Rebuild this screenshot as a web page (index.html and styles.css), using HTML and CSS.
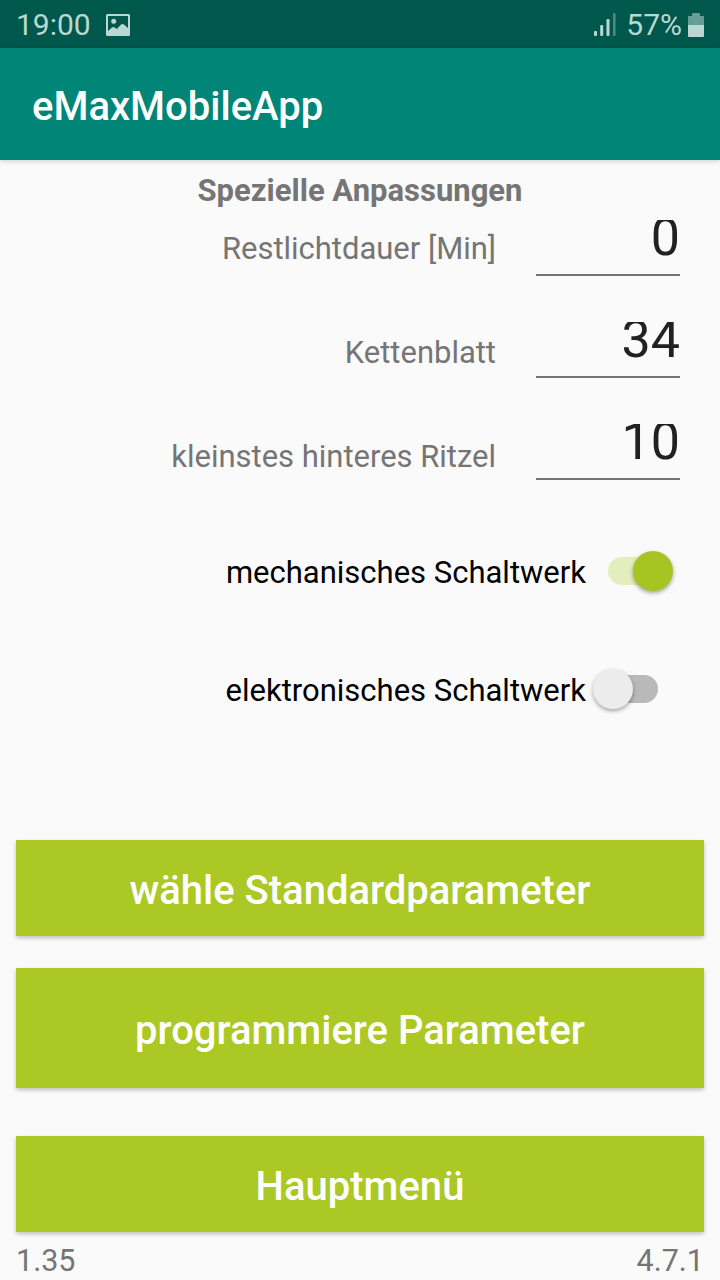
FILE: index.html
```html
<!DOCTYPE html>
<html lang="de">
<head>
<meta charset="utf-8">
<title>eMaxMobileApp</title>
<link rel="stylesheet" href="styles.css">
</head>
<body>
<header class="status">
  <span class="clock">19:00</span>
  <svg class="picture" width="24" height="22" viewBox="0 0 24 22"><path fill="currentColor" fill-rule="evenodd" d="M1.5 0h21A1.5 1.5 0 0 1 24 1.500v19a1.500 1.500 0 0 1-1.500 1.500h-21A1.500 1.500 0 0 1 0 20.500v-19A1.500 1.500 0 0 1 1.500 0zM2 2v15l4-3.500q1.500-1 3 .2l1.800 1.300 4-4.200q1.700-1.600 3.400 0L22 14V2z"/><circle cx="7.700" cy="7.300" r="2.500" fill="currentColor"/></svg>
  <span class="space"></span>
  <svg class="signal" width="22" height="23" viewBox="0 0 22 23" fill="currentColor"><rect y="18" width="3" height="5" rx="1"/><rect x="6.200" y="12" width="3" height="11" rx="1"/><rect x="12.500" y="6" width="3" height="17" rx="1"/><rect x="19" width="2.600" height="23" rx="1" opacity=".4"/></svg>
  <span class="percent">57%</span>
  <svg class="battery" width="16" height="24" viewBox="0 0 16 24" fill="currentColor"><path opacity=".55" d="M5 0h6q1 0 1 1v2h3q1 0 1 1v8H0V4q0-1 1-1h3V1q0-1 1-1z"/><path d="M0 12h16v11q0 1-1 1H1q-1 0-1-1z"/></svg>
</header>
<div class="appbar">eMaxMobileApp</div>
<main>
  <h1 class="heading">Spezielle Anpassungen</h1>
  <section class="fields">
    <div class="field"><span class="label">Restlichtdauer [Min]</span><div class="input"><span>0</span></div></div>
    <div class="field"><span class="label">Kettenblatt</span><div class="input"><span>34</span></div></div>
    <div class="field"><span class="label">kleinstes hinteres Ritzel</span><div class="input"><span>10</span></div></div>
  </section>
  <section class="switches">
    <div class="switch-row"><span class="switch-label">mechanisches Schaltwerk</span><span class="switch on"><i class="track"></i><i class="thumb"></i></span></div>
    <div class="switch-row"><span class="switch-label">elektronisches Schaltwerk</span><span class="switch"><i class="track"></i><i class="thumb"></i></span></div>
  </section>
  <section class="actions">
    <button class="button">wähle Standardparameter</button>
    <button class="button tall">programmiere Parameter</button>
    <button class="button last">Hauptmenü</button>
  </section>
</main>
<footer class="versions"><span>1.35</span><span>4.7.1</span></footer>
</body>
</html>
```
FILE: styles.css
```css
* { box-sizing: border-box; }
body { margin: 0; width: 720px; height: 1280px; overflow: hidden; background: #fafafa; font-family: Roboto, sans-serif; color: #757575; display: flex; flex-direction: column; }
.status { height: 48px; flex: none; background: #00574b; color: #b9d8d3; display: flex; align-items: center; padding: 1px 16px 0; font-size: 30px; }
.picture { margin-left: 15px; }
.space { flex: 1; }
.signal { margin-right: 10px; }
.battery { margin-left: 6px; }
.appbar { height: 112px; flex: none; background: #008577; color: #fff; font-size: 40px; font-weight: 500; line-height: 47px; padding: 35px 32px 0; box-shadow: 0 1px 5px rgba(0,0,0,.18); }
main { height: 1080px; flex: none; }
.heading { margin: 0; height: 60px; padding-top: 12px; text-align: center; font-size: 31px; line-height: 37px; font-weight: 700; }
.fields { height: 311px; }
.field { height: 102px; display: flex; justify-content: flex-end; padding-right: 40px; }
.label { font-size: 31px; line-height: 36px; letter-spacing: -.02px; padding-top: 11px; margin-right: 40px; }
.field:nth-child(2) .label { padding-top: 13px; }
.field:nth-child(3) .label { padding-top: 15px; }
.input { width: 144px; height: 56px; border-bottom: 2px solid #757575; text-align: right; font-size: 52px; line-height: 35px; color: #212121; }
.input span { display: block; height: 52px; overflow: hidden; }
.switches { height: 309px; }
.switch-row { height: 118px; padding: 20px 40px 0 0; display: flex; justify-content: flex-end; }
.switch-label { font-size: 31px; line-height: 38px; color: #000; padding-top: 3px; margin-right: 7px; }
.switch { width: 87px; height: 40px; position: relative; }
.track { position: absolute; left: 15px; top: 6px; width: 50px; height: 28px; border-radius: 14px; background: #b9b9b9; }
.thumb { position: absolute; left: 0; top: 0; width: 40px; height: 40px; border-radius: 50%; background: #ececec; box-shadow: 0 2px 4px rgba(0,0,0,.35); }
.on .track { background: #e3edbd; }
.on .thumb { left: 40px; background: #a7c522; }
.actions { display: flex; flex-direction: column; gap: 32px; padding: 0 16px; }
.button { height: 96px; border: 0; padding: 4px 0 0; background: #abc824; color: #fff; font: 500 40px/47px Roboto, sans-serif; box-shadow: 0 2px 4px rgba(0,0,0,.24); }
.tall { height: 120px; }
.last { margin-top: 16px; }
.versions { display: flex; justify-content: space-between; padding: 3px 16px 0; font-size: 30.5px; line-height: 36px; }
```
